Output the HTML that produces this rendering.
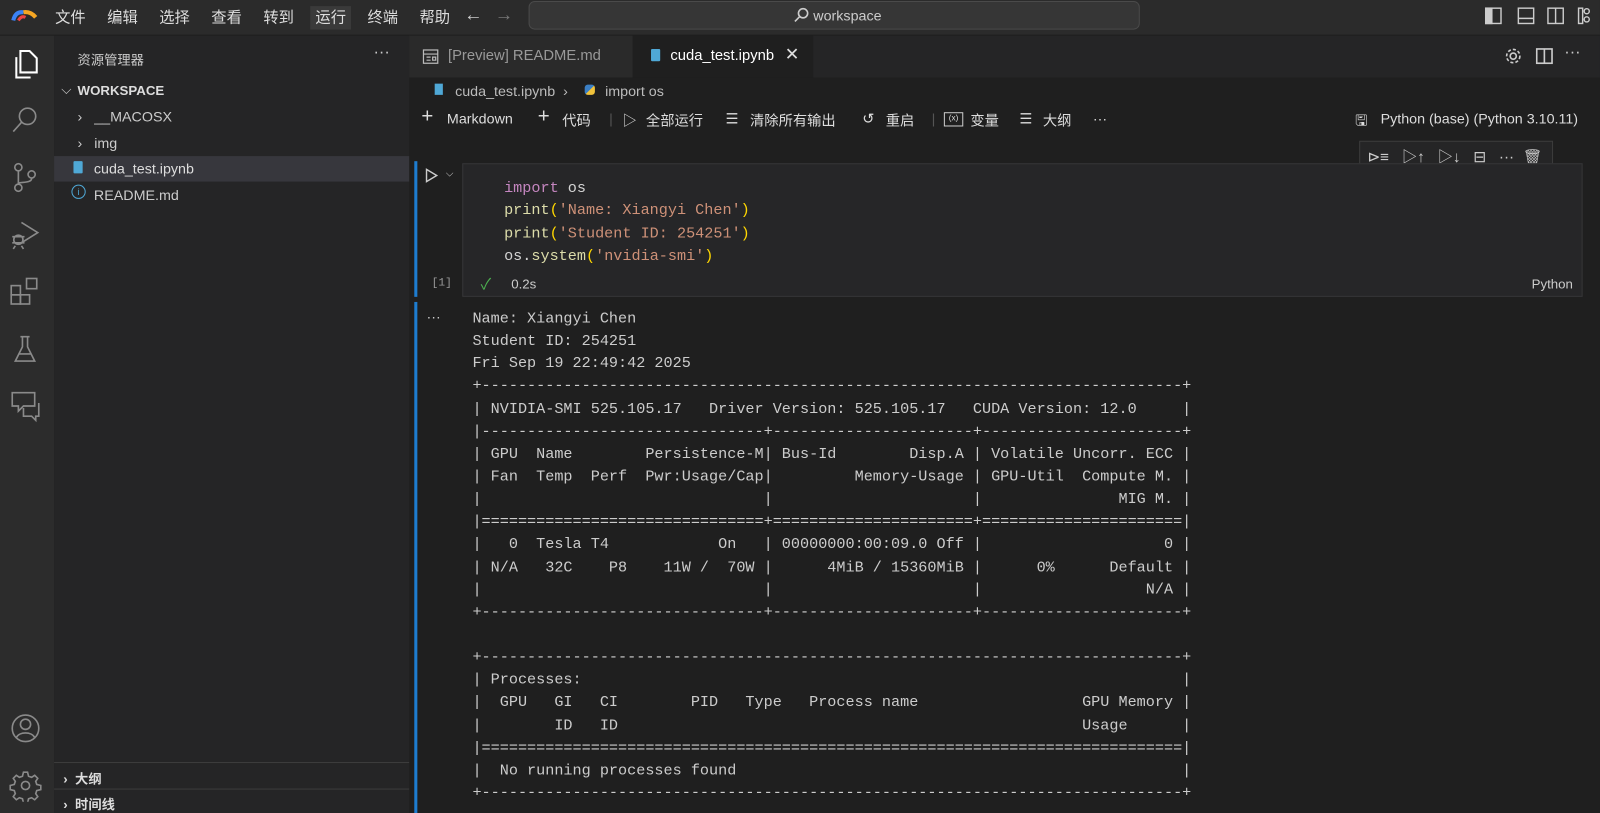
<!DOCTYPE html>
<html><head><meta charset="utf-8"><style>
*{margin:0;padding:0;box-sizing:border-box}
html,body{width:1600px;height:813px;overflow:hidden;background:#1f1f1f}
#w{position:absolute;left:0;top:0;width:1568px;height:797px;transform:scale(1.0204,1.0201);transform-origin:0 0;font-family:"Liberation Sans","Noto Sans CJK SC",sans-serif;color:#ccc;font-size:14px}
.a{position:absolute;white-space:nowrap}
.mono{font-family:"Liberation Mono","Noto Sans CJK SC",monospace;font-size:14.87px;white-space:pre;line-height:22.14px}
svg{position:absolute;fill:none;stroke:#8a8a8a;stroke-width:1.6}
.menu span{margin-right:21px;color:#ddd;font-size:15px}
.tb span{position:absolute;top:0;font-size:14px;color:#ddd;white-space:nowrap}
</style></head><body><div id="w">
<div class="a" style="left:0;top:0;width:1568px;height:35px;background:#2b2b2b;border-bottom:1px solid #1e1e1e"></div>
<svg style="left:9px;top:5px" width="30" height="20" viewBox="0 0 30 20"><path d="M4 15 Q6 6 14 7" stroke="#3b82f6" stroke-width="4"/><path d="M14 7 Q21 6 26 12" stroke="#f5a623" stroke-width="4"/><path d="M9 15 Q12 10 16 12" stroke="#e44" stroke-width="3"/></svg>
<div class="a menu" style="left:54px;top:6px"><span>文件</span><span>编辑</span><span>选择</span><span>查看</span><span>转到</span><span style="background:#3a3a3a;padding:3px 5px;margin-left:-5px;margin-right:16px">运行</span><span>终端</span><span>帮助</span></div>
<div class="a" style="left:455px;top:4px;color:#ccc;font-size:18px">←</div>
<div class="a" style="left:485px;top:4px;color:#777;font-size:18px">→</div>
<div class="a" style="left:518px;top:1px;width:599px;height:28px;background:#363636;border:1px solid #4a4a4a;border-radius:6px"></div>
<svg style="left:777px;top:7px" width="16" height="16" viewBox="0 0 16 16"><circle cx="10" cy="6" r="4.5" stroke="#ccc"/><path d="M7 9 L2 14" stroke="#ccc"/></svg>
<div class="a" style="left:797px;top:7px;font-size:14px;color:#ccc">workspace</div>
<svg style="left:1455px;top:7px" width="105" height="18" viewBox="0 0 105 18"><g stroke="#ccc" stroke-width="1.4"><rect x="1" y="1" width="15" height="15"/><rect x="1" y="1" width="6" height="15" fill="#ccc"/><rect x="33" y="1" width="15" height="15"/><path d="M33 11h15"/><rect x="62" y="1" width="15" height="15"/><path d="M69.5 1v15"/><rect x="92" y="1" width="4" height="15"/><circle cx="100" cy="4" r="2.5"/><circle cx="100" cy="12" r="2.5"/></g></svg>
<div class="a" style="left:0;top:35px;width:53px;height:762px;background:#2c2c2c"></div>
<svg style="left:11px;top:48px" width="28" height="30" viewBox="0 0 28 30"><path d="M9 2h9l7 7v14H9z M5 8v20h14" stroke="#fff" stroke-width="2"/></svg>
<svg style="left:11px;top:103px" width="28" height="30" viewBox="0 0 28 30"><circle cx="16" cy="11" r="8"/><path d="M10 17 2 26"/></svg>
<svg style="left:11px;top:158px" width="28" height="32" viewBox="0 0 28 32"><circle cx="7" cy="6" r="3.5"/><circle cx="7" cy="26" r="3.5"/><circle cx="20" cy="13" r="3.5"/><path d="M7 10v12 M20 17c0 5-13 3-13 5"/></svg>
<svg style="left:9px;top:214px" width="32" height="32" viewBox="0 0 32 32"><path d="M12 4 28 14 12 24"/><circle cx="9" cy="21" r="4.5"/><path d="M3 18h12 M3 24h12 M6 27l-2 3 M12 27l2 3"/></svg>
<svg style="left:9px;top:271px" width="32" height="32" viewBox="0 0 32 32"><rect x="2" y="9" width="9" height="9"/><rect x="2" y="18" width="9" height="9"/><rect x="11" y="18" width="9" height="9"/><rect x="17" y="2" width="10" height="10"/></svg>
<svg style="left:11px;top:328px" width="28" height="30" viewBox="0 0 28 30"><path d="M9 2h9 M11 2v10L4 26h19L16 12V2 M7 19h13"/></svg>
<svg style="left:9px;top:382px" width="32" height="32" viewBox="0 0 32 32"><path d="M3 3h22v13H14l-5 5v-5H3z M14 18v8h8l4 4v-4h3V13"/></svg>
<svg style="left:9px;top:698px" width="32" height="32" viewBox="0 0 32 32"><circle cx="16" cy="16" r="13"/><circle cx="16" cy="12" r="5"/><path d="M7 25c3-6 15-6 18 0"/></svg>
<svg style="left:9px;top:754px" width="32" height="32" viewBox="0 0 32 32"><circle cx="16" cy="16" r="4"/><path d="M14 3h4l1 4 3 1 3-2 3 3-2 3 1 3 4 1v4l-4 1-1 3 2 3-3 3-3-2-3 1-1 4h-4l-1-4-3-1-3 2-3-3 2-3-1-3-4-1v-4l4-1 1-3-2-3 3-3 3 2 3-1z"/></svg>
<div class="a" style="left:53px;top:35px;width:348px;height:762px;background:#252526"></div>
<div class="a" style="left:76px;top:48px;font-size:13px;color:#ccc">资源管理器</div>
<div class="a" style="left:366px;top:43px;font-size:16px;color:#ccc">···</div>
<div class="a" style="left:60px;top:80px;font-size:13px;color:#ccc">⌵</div>
<div class="a" style="left:76px;top:81px;font-size:13px;font-weight:bold;color:#ddd">WORKSPACE</div>
<div class="a" style="left:76px;top:106px;font-size:14px;color:#ccc">›&nbsp;&nbsp; __MACOSX</div>
<div class="a" style="left:76px;top:132px;font-size:14px;color:#ccc">›&nbsp;&nbsp; img</div>
<div class="a" style="left:53px;top:153px;width:348px;height:25px;background:#37373d"></div>
<div class="a" style="left:72px;top:158px;width:9px;height:12px;background:#4fa8d6;border-radius:1px"></div>
<div class="a" style="left:92px;top:157px;font-size:14px;color:#ddd">cuda_test.ipynb</div>
<div class="a" style="left:70px;top:181px;width:14px;height:14px;border:1.3px solid #4fa8d6;border-radius:50%;color:#4fa8d6;font-size:9px;text-align:center;line-height:12px">i</div>
<div class="a" style="left:92px;top:183px;font-size:14px;color:#ccc">README.md</div>
<div class="a" style="left:53px;top:747px;width:348px;height:1px;background:#3c3c3c"></div>
<div class="a" style="left:53px;top:773px;width:348px;height:1px;background:#3c3c3c"></div>
<div class="a" style="left:62px;top:753px;font-size:13px;font-weight:bold;color:#ddd">›&nbsp; 大纲</div>
<div class="a" style="left:62px;top:778px;font-size:13px;font-weight:bold;color:#ddd">›&nbsp; 时间线</div>
<div class="a" style="left:401px;top:35px;width:1167px;height:41px;background:#252526"></div>
<div class="a" style="left:401px;top:35px;width:219px;height:41px;background:#2a2a2a"></div>
<div class="a" style="left:620px;top:35px;width:177px;height:41px;background:#1f1f1f"></div>
<svg style="left:414px;top:48px" width="16" height="16" viewBox="0 0 16 16"><rect x="1" y="1" width="14" height="13" stroke="#bbb" stroke-width="1.2"/><path d="M1 5h14 M4 8h4 M4 11h4 M10 8h3v3h-3z" stroke="#bbb" stroke-width="1.2"/></svg>
<div class="a" style="left:439px;top:47px;font-size:14.5px;color:#999">[Preview] README.md</div>
<div class="a" style="left:638px;top:48px;width:9px;height:12px;background:#4fa8d6;border-radius:1px"></div>
<div class="a" style="left:657px;top:47px;font-size:14.5px;color:#fff">cuda_test.ipynb</div>
<div class="a" style="left:769px;top:44px;font-size:17px;color:#ddd">✕</div>
<svg style="left:1474px;top:46px" width="18" height="18" viewBox="0 0 18 18"><circle cx="9" cy="9" r="3" stroke="#ccc"/><circle cx="9" cy="9" r="6.5" stroke="#ccc" stroke-dasharray="3 2"/></svg>
<svg style="left:1505px;top:47px" width="18" height="17" viewBox="0 0 18 17"><rect x="1" y="1" width="15" height="14" stroke="#ccc"/><path d="M8.5 1v14" stroke="#ccc"/></svg>
<div class="a" style="left:1533px;top:43px;font-size:16px;color:#ccc">···</div>
<div class="a" style="left:426px;top:82px;width:8px;height:11px;background:#4fa8d6"></div>
<div class="a" style="left:446px;top:81px;font-size:14px;color:#bbb">cuda_test.ipynb&nbsp; ›&nbsp;</div>
<div class="a" style="left:573px;top:83px;width:10px;height:10px;border-radius:3px;background:linear-gradient(135deg,#3b7fc4 50%,#f0c23b 50%)"></div>
<div class="a" style="left:593px;top:81px;font-size:14px;color:#bbb">import os</div>
<div class="a tb" style="left:0;top:108px">
<span style="left:413px;font-size:20px;top:-5px">+</span><span style="left:438px">Markdown</span>
<span style="left:527px;font-size:20px;top:-5px">+</span><span style="left:551px">代码</span>
<span style="left:597px;color:#555">|</span>
<span style="left:610px">▷</span><span style="left:633px">全部运行</span>
<span style="left:711px">☰</span><span style="left:735px">清除所有输出</span>
<span style="left:845px">↺</span><span style="left:868px">重启</span>
<span style="left:913px;color:#555">|</span>
<span style="left:925px;border:1px solid #ccc;width:19px;height:14px;top:2px;font-size:8px;text-align:center">(x)</span><span style="left:951px">变量</span>
<span style="left:999px">☰</span><span style="left:1022px">大纲</span>
<span style="left:1071px">···</span>
<span style="left:1328px">🖫</span><span style="left:1353px">Python (base) (Python 3.10.11)</span>
</div>
<div class="a" style="left:1332px;top:138px;width:190px;height:30px;background:#252526;border:1px solid #3c3c3c"></div>
<div class="a" style="left:1340px;top:143px;font-size:15px;color:#ccc">⊳≡&nbsp;&nbsp; ▷↑&nbsp;&nbsp; ▷↓&nbsp;&nbsp; ⊟&nbsp;&nbsp; ··· &nbsp;🗑</div>
<div class="a" style="left:406px;top:158px;width:3px;height:133px;background:#1e7dd0"></div>
<div class="a" style="left:406px;top:296px;width:3px;height:501px;background:#1e7dd0"></div>
<svg style="left:416px;top:164px" width="14" height="16" viewBox="0 0 14 16"><path d="M2 2 12 8 2 14z" stroke="#ccc" stroke-width="1.4"/></svg>
<div class="a" style="left:437px;top:165px;font-size:10px;color:#ccc">⌵</div>
<div class="a" style="left:453px;top:160px;width:1098px;height:131px;background:#262628;border:1px solid #353537"></div>
<div class="a mono" style="left:494px;top:174px;color:#d4d4d4;line-height:22.3px"><span style="color:#c586c0">import</span> os
<span style="color:#dcdcaa">print</span><span style="color:#ffd700">(</span><span style="color:#ce9178">'Name: Xiangyi Chen'</span><span style="color:#ffd700">)</span>
<span style="color:#dcdcaa">print</span><span style="color:#ffd700">(</span><span style="color:#ce9178">'Student ID: 254251'</span><span style="color:#ffd700">)</span>
os.<span style="color:#dcdcaa">system</span><span style="color:#ffd700">(</span><span style="color:#ce9178">'nvidia-smi'</span><span style="color:#ffd700">)</span></div>
<div class="a" style="left:423px;top:272px;font-size:11px;color:#999;font-family:'Liberation Mono',monospace">[1]</div>
<div class="a" style="left:471px;top:268px;font-size:15px;color:#4caf50">✓</div>
<div class="a" style="left:501px;top:271px;font-size:13px;color:#ccc">0.2s</div>
<div class="a" style="left:1501px;top:271px;font-size:13px;color:#ccc">Python</div>
<div class="a" style="left:418px;top:302px;font-size:14px;color:#ccc">···</div>
<div class="a mono" style="left:463px;top:302px;color:#ccc">Name: Xiangyi Chen
Student ID: 254251
Fri Sep 19 22:49:42 2025
+-----------------------------------------------------------------------------+
| NVIDIA-SMI 525.105.17   Driver Version: 525.105.17   CUDA Version: 12.0     |
|-------------------------------+----------------------+----------------------+
| GPU  Name        Persistence-M| Bus-Id        Disp.A | Volatile Uncorr. ECC |
| Fan  Temp  Perf  Pwr:Usage/Cap|         Memory-Usage | GPU-Util  Compute M. |
|                               |                      |               MIG M. |
|===============================+======================+======================|
|   0  Tesla T4            On   | 00000000:00:09.0 Off |                    0 |
| N/A   32C    P8    11W /  70W |      4MiB / 15360MiB |      0%      Default |
|                               |                      |                  N/A |
+-------------------------------+----------------------+----------------------+
                                                                               
+-----------------------------------------------------------------------------+
| Processes:                                                                  |
|  GPU   GI   CI        PID   Type   Process name                  GPU Memory |
|        ID   ID                                                   Usage      |
|=============================================================================|
|  No running processes found                                                 |
+-----------------------------------------------------------------------------+</div>
</div></body></html>
